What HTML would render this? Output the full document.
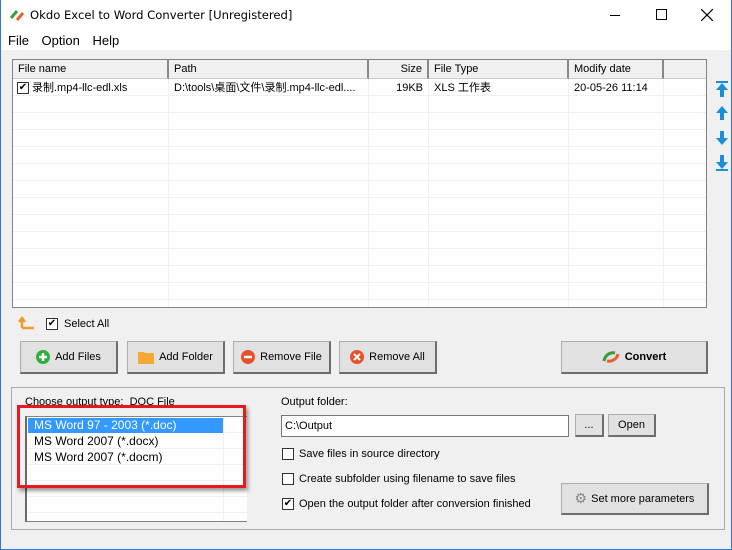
<!DOCTYPE html>
<html><head><meta charset="utf-8"><style>
*{box-sizing:border-box;margin:0;padding:0}
body{width:732px;height:550px;position:relative;overflow:hidden;background:#f0f0f0;font-family:"Liberation Sans","Noto Sans CJK SC",sans-serif;font-size:11px;color:#000}
.a{position:absolute;line-height:13px}
.btn{position:absolute;background:#e1e1e1;border:1px solid #adadad;border-right:2px solid #6d6d6d;border-bottom:2px solid #6d6d6d;display:flex;align-items:center;justify-content:center;font-size:11px}
.btn svg{margin-right:5px}
.cb{position:absolute;width:12px;height:12px;border:1px solid #333;background:#fff;font-size:10px;line-height:10px;text-align:center}
.hd{position:absolute;top:0;height:19px;border-right:2px solid #888;border-bottom:1px solid #ccc;padding:3px 5px;background:#f0f0f0}
</style></head><body>
<div class="a" style="left:0;top:0;width:732px;height:50px;background:#fff"></div>
<div class="a" style="left:0;top:0;width:1px;height:550px;background:#2b79d6"></div>
<div class="a" style="left:731px;top:0;width:1px;height:550px;background:#2b79d6"></div>
<div class="a" style="left:0;top:549px;width:732px;height:1px;background:#2b79d6"></div>
<svg class="a" style="left:9px;top:8px" width="16" height="14"><path d="M2 10 L8 3" stroke="#3a9a3a" stroke-width="3"/><path d="M8 12 L14 5" stroke="#e8602a" stroke-width="3"/></svg>
<div class="a" style="left:30px;top:9px;font-family:'DejaVu Sans',sans-serif;font-size:11.6px">Okdo Excel to Word Converter [Unregistered]</div>
<div class="a" style="left:610px;top:15px;width:10px;height:1px;background:#000"></div>
<div class="a" style="left:656px;top:9px;width:11px;height:11px;border:1px solid #000"></div>
<svg class="a" style="left:701px;top:9px" width="12" height="12"><path d="M0 0L12 12M12 0L0 12" stroke="#000" stroke-width="1.2"/></svg>
<div class="a" style="left:8px;top:34px;font-size:13px;word-spacing:9px">File Option Help</div>
<div class="a" style="left:12px;top:59px;width:695px;height:249px;background:#fff;border:1px solid #828282">
 <div class="hd" style="left:0;width:156px">File name</div>
 <div class="hd" style="left:156px;width:200px">Path</div>
 <div class="hd" style="left:356px;width:60px;text-align:right">Size</div>
 <div class="hd" style="left:416px;width:140px">File Type</div>
 <div class="hd" style="left:556px;width:95px">Modify date</div>
 <div class="hd" style="left:651px;width:42px;border-right:none"></div>
 <div class="a" style="left:0;top:19px;width:693px;height:228px;background:repeating-linear-gradient(#fff 0 16px,#f0f0f0 16px 17px)"></div>
 <div class="a" style="left:155px;top:19px;width:1px;height:228px;background:#f0f0f0"></div>
 <div class="a" style="left:355px;top:19px;width:1px;height:228px;background:#f0f0f0"></div>
 <div class="a" style="left:415px;top:19px;width:1px;height:228px;background:#f0f0f0"></div>
 <div class="a" style="left:555px;top:19px;width:1px;height:228px;background:#f0f0f0"></div>
 <div class="a" style="left:650px;top:19px;width:1px;height:228px;background:#f0f0f0"></div>
 <div class="cb" style="left:4px;top:22px">✔</div>
 <div class="a" style="left:19px;top:22px">录制.mp4-llc-edl.xls</div>
 <div class="a" style="left:161px;top:22px">D:\tools\桌面\文件\录制.mp4-llc-edl....</div>
 <div class="a" style="left:356px;top:22px;width:54px;text-align:right">19KB</div>
 <div class="a" style="left:421px;top:22px">XLS 工作表</div>
 <div class="a" style="left:561px;top:22px">20-05-26 11:14</div>
</div>
<svg class="a" style="left:714px;top:80px" width="16" height="92" fill="#1a8fd8">
<rect x="2" y="1" width="12" height="2"/><path d="M8 3L14 10H10V17H6V10H2Z"/>
<path d="M8 26L14 33H10V40H6V33H2Z"/>
<path d="M8 65L14 58H10V51H6V58H2Z"/>
<path d="M8 89L14 82H10V75H6V82H2Z"/><rect x="2" y="89" width="12" height="2"/>
</svg>
<svg class="a" style="left:18px;top:316px" width="18" height="14"><path d="M4 12H16M4 12V3M1 6L4 2L7 6" stroke="#f39a2e" stroke-width="2.5" fill="none"/></svg>
<div class="cb" style="left:46px;top:318px">✔</div>
<div class="a" style="left:64px;top:318px">Select All</div>
<div class="btn" style="left:20px;top:341px;width:98px;height:33px"><svg width="14" height="14"><circle cx="7" cy="7" r="7" fill="#2eae3a"/><path d="M7 3V11M3 7H11" stroke="#fff" stroke-width="2.5"/></svg>Add Files</div>
<div class="btn" style="left:127px;top:341px;width:98px;height:33px"><svg width="16" height="14"><path d="M0 2H6L7 3H16V14H0Z" fill="#f5a833"/></svg>Add Folder</div>
<div class="btn" style="left:233px;top:341px;width:98px;height:33px"><svg width="14" height="14"><circle cx="7" cy="7" r="7" fill="#e8502a"/><path d="M3 7H11" stroke="#fff" stroke-width="2.5"/></svg>Remove File</div>
<div class="btn" style="left:339px;top:341px;width:98px;height:33px"><svg width="14" height="14"><circle cx="7" cy="7" r="7" fill="#e8502a"/><path d="M4 4L10 10M10 4L4 10" stroke="#fff" stroke-width="2"/></svg>Remove All</div>
<div class="btn" style="left:561px;top:341px;width:147px;height:33px;font-weight:bold"><svg width="18" height="16"><path d="M2 12C3 6 8 3 13 4" stroke="#3a9a3a" stroke-width="3" fill="none"/><path d="M16 5C15 10 10 13 5 12" stroke="#e8602a" stroke-width="3" fill="none"/></svg>Convert</div>
<div class="a" style="left:11px;top:387px;width:714px;height:143px;border:1px solid #aaa"></div>
<div class="a" style="left:25px;top:396px">Choose output type:&nbsp; DOC File</div>
<div class="a" style="left:25px;top:416px;width:222px;height:106px;background:#fff;border:1px solid #828282;border-left:2px solid #696969">
 <div class="a" style="left:0;top:0;width:220px;height:104px;background:repeating-linear-gradient(#fff 0 15px,#f0f0f0 15px 16px)"></div>
 <div class="a" style="left:196px;top:0;width:1px;height:104px;background:#f0f0f0"></div>
 <div class="a" style="left:1px;top:1px;width:195px;height:15px;background:#3399ff"></div>
 <div class="a" style="left:7px;top:2px;color:#fff;font-size:12px">MS Word 97 - 2003 (*.doc)</div>
 <div class="a" style="left:7px;top:18px;font-size:12px">MS Word 2007 (*.docx)</div>
 <div class="a" style="left:7px;top:34px;font-size:12px">MS Word 2007 (*.docm)</div>
</div>
<div class="a" style="left:17px;top:405px;width:229px;height:83px;border:3px solid #e8181f;box-shadow:2px 3px 4px rgba(0,0,0,.4)"></div>
<div class="a" style="left:281px;top:396px">Output folder:</div>
<div class="a" style="left:281px;top:415px;width:288px;height:22px;background:#fff;border:1px solid #777;padding:4px 3px">C:\Output</div>
<div class="btn" style="left:575px;top:414px;width:29px;height:23px">...</div>
<div class="btn" style="left:608px;top:414px;width:48px;height:23px">Open</div>
<div class="cb" style="left:282px;top:448px"></div><div class="a" style="left:299px;top:448px">Save files in source directory</div>
<div class="cb" style="left:282px;top:473px"></div><div class="a" style="left:299px;top:473px">Create subfolder using filename to save files</div>
<div class="cb" style="left:282px;top:498px">✔</div><div class="a" style="left:299px;top:498px">Open the output folder after conversion finished</div>
<div class="btn" style="left:561px;top:483px;width:148px;height:32px"><span style="color:#888;font-size:14px;margin-right:4px">⚙</span>Set more parameters</div>
</body></html>
